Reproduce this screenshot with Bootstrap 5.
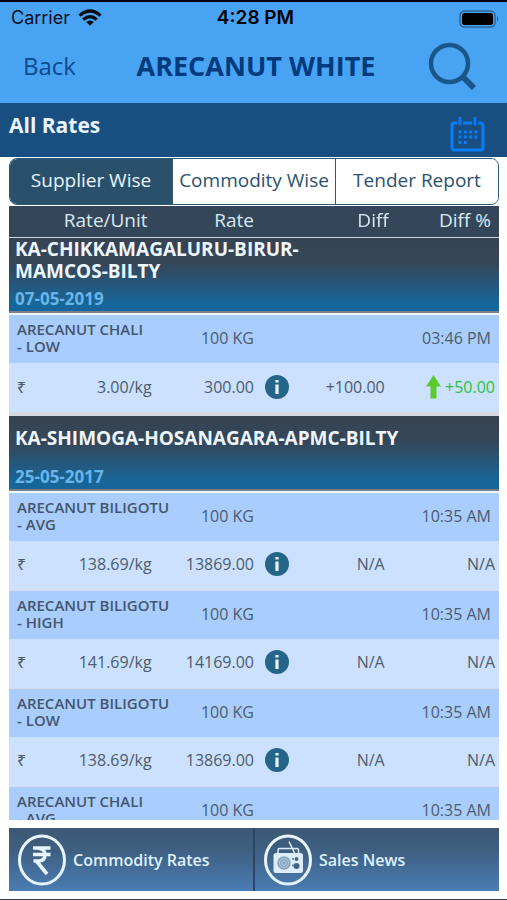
<!DOCTYPE html>
<html lang="en">
<head>
<meta charset="utf-8">
<meta name="viewport" content="width=device-width, initial-scale=1">
<title>Arecanut White - All Rates</title>
<link href="https://cdn.jsdelivr.net/npm/bootstrap@5.3.0/dist/css/bootstrap.min.css" rel="stylesheet">
<style>
  body { font-family: "Open Sans", "Noto Sans", sans-serif; background: #fff; color: #4b5d6b; }
  .app { height: 100vh; border-top: 2px solid #000; border-bottom: 1px solid #333a42; }
  .top-area { background: #49a3f3; }
  .status { height: 32px; padding: 0 7px 0 11px; font: 18px/32px Inter, sans-serif; color: #0b1118; }
  .status .side { flex: 1 1 0; }
  .clock { font-size: 19px; font-weight: 600; color: #000; }
  .title-bar { height: 69px; padding: 0 30px 5px 23px; }
  .back { font-size: 24px; color: #0d4a8f; text-decoration: none; }
  .screen-title { font-size: 27px; font-weight: 700; color: #023a7e; }
  .section-bar { background: #184f80; height: 55px; padding: 0 22px 0 9px; }
  .section-bar h2 { font-size: 21px; line-height: 44px; font-weight: 700; color: #eaf4ff; }
  .bare { background: none; border: 0; padding: 0; line-height: 0; }
  .content { padding: 1px 8px 8px 9px; min-height: 0; }
  .tabs { height: 47px; border: 1px solid #2b5876; border-radius: 8px; margin-bottom: 1px; }
  .tabs button { flex: 1 1 0; border: 0; background: #fff; color: #2b516d; font-size: 19px; white-space: nowrap; padding: 0 0 2px; }
  .tabs button + button { border-left: 1px solid #2b5876; }
  .tabs .on { background: #2a516c; color: #eaf4fb; }
  .rates-scroll { min-height: 0; overflow-y: auto; scrollbar-width: none; }
  .rates-scroll::-webkit-scrollbar { display: none; }
  .rates { table-layout: fixed; border-collapse: separate; border-spacing: 0; font-size: 16px; line-height: 18px; }
  .rates th, .rates td { padding: 0; text-align: right; vertical-align: middle; }
  .rates thead th { position: sticky; top: 0; height: 32px; padding-bottom: 2px; background: #34475a; border-bottom: 1px solid #c9d3dc; color: #dbe7f1; font-size: 19px; line-height: 26px; font-weight: 400; }
  .rates thead th:first-child { padding-right: 28px; }
  .rates thead th:last-child { padding-right: 8px; }
  .rates .group { height: 77px; padding: 0 6px; text-align: left; vertical-align: top; border-bottom: 2px solid #f3f7fc; background: linear-gradient(#364353 0%, #34475a 35%, #17669a 88%, #17669a 98%, #7b7f88 98%); }
  .group-name { width: 400px; max-width: 100%; height: 44px; font-size: 19px; line-height: 22px; font-weight: 700; color: #eef6fd; }
  .group-name.two { width: 300px; }
  .group-date { padding-top: 8px; font-size: 17px; line-height: 18px; font-weight: 700; color: #68b5ea; }
  .rates .name-row > * { background: #a9cdff; height: 48px; padding-bottom: 2px; }
  .name-row th { padding-left: 8px !important; text-align: left !important; font-size: 15px; line-height: 17px; font-weight: 600; color: #44566a; white-space: nowrap; }
  .name-row td:last-child { padding-right: 8px; }
  .value-row td { background: #cbe1ff; height: 50px; padding-bottom: 2px; border-bottom: 1px solid #d8dde6; }
  .value-row td:first-child { padding-left: 8px; padding-right: 24px; }
  .value-row td:nth-child(4) { padding-right: 4px; }
  .value-row td:last-child { padding-right: 4px; }
  .value-row .info { text-align: center; line-height: 0; }
  .value-row.end td { height: 53px; padding-bottom: 0; border-bottom: 4px solid #d5dae1; }
  .rise { color: #2fc03a; }
  .dock { height: 63px; margin: 0 8px 8px 9px; background: linear-gradient(#3d5874 0%, #3f5f81 35%, #4a7cb4 100%); }
  .dock a { flex: 1 1 0; gap: 7px; padding-left: 9px; color: #dff1ff; font-size: 16px; font-weight: 600; text-decoration: none; }
  .dock a + a { border-left: 2px solid #2c4766; }
</style>
<script src="https://cdn.jsdelivr.net/npm/bootstrap@5.3.0/dist/js/bootstrap.bundle.min.js"></script>
</head>
<body>
<svg class="d-none" aria-hidden="true">
  <symbol id="info" viewBox="0 0 24 24"><circle cx="12" cy="12" r="12" fill="#246589"/><path d="M10.4 5h3.2v2.6h-3.2zM10.4 9.4h3.2V19h-3.2z" fill="#e8f4ff"/></symbol>
</svg>
<div class="app d-flex flex-column">
  <header class="top-area">
    <div class="status d-flex align-items-center">
      <div class="side d-flex align-items-center gap-2">Carrier
        <svg width="24" height="18" viewBox="0 0 24 18" aria-label="Wi-Fi"><g fill="none" stroke="#050a10" stroke-width="3.2"><path d="M1.5 6.6Q12-2.6 22.500 6.600"/><path d="M5.200 10.600Q12 4.600 18.800 10.600"/></g><path d="M12 16.800l-3.800-3.900q3.800-3 7.600 0z" fill="#050a10"/></svg>
      </div>
      <div class="clock">4:28 PM</div>
      <div class="side text-end lh-1">
        <svg width="41" height="18" viewBox="0 0 41 18" aria-label="Battery"><rect x="1" y="1" width="35" height="16" rx="4.500" fill="none" stroke="#2d6595" stroke-width="1.500"/><rect x="3" y="3" width="31" height="12" rx="2.500"/><path d="M38 6q2.500 3 0 6z" fill="#2d6595"/></svg>
      </div>
    </div>
    <div class="title-bar d-flex align-items-center justify-content-between">
      <a class="back" href="#">Back</a>
      <h1 class="screen-title m-0 ps-2">ARECANUT WHITE</h1>
      <button class="bare" type="button" aria-label="Search">
        <svg width="49" height="49" viewBox="0 0 49 49" fill="none" stroke="#1b5688"><circle cx="21.500" cy="21.500" r="18.500" stroke-width="4.500"/><path d="M34 34l12 12" stroke-width="6"/></svg>
      </button>
    </div>
  </header>
  <div class="section-bar d-flex justify-content-between align-items-start">
    <h2 class="m-0">All Rates</h2>
    <button class="bare align-self-end pb-1" type="button" aria-label="Choose date">
      <svg width="35" height="36" viewBox="0 0 35 36"><g fill="none" stroke="#087dfc" stroke-width="3"><path d="M7 6H4.500Q2 6 2 8.500V30.500Q2 33 4.500 33H30.500Q33 33 33 30.500V8.500Q33 6 30.500 6H28M13 6H22"/><path d="M10 1v6M25 1v6" stroke-linecap="round"/><path d="M8.500 15H28M8.500 20H28M8.500 25.500H18" stroke-dasharray="3 2.300"/></g></svg>
    </button>
  </div>
  <main class="content d-flex flex-column flex-grow-1">
    <div class="tabs d-flex overflow-hidden flex-shrink-0" role="tablist">
      <button class="on" type="button" role="tab" aria-selected="true">Supplier Wise</button>
      <button type="button" role="tab" aria-selected="false">Commodity Wise</button>
      <button type="button" role="tab" aria-selected="false">Tender Report</button>
    </div>
    <div class="rates-scroll flex-grow-1">
      <table class="rates w-100">
        <colgroup><col style="width:34%"><col style="width:16%"><col style="width:9.500%"><col style="width:18%"><col></colgroup>
        <thead><tr><th scope="col">Rate/Unit</th><th scope="col">Rate</th><th></th><th scope="col">Diff</th><th scope="col">Diff %</th></tr></thead>
        <tbody>
          <tr><th class="group" colspan="5"><div class="group-name two d-flex align-items-center">KA-CHIKKAMAGALURU-BIRUR-MAMCOS-BILTY</div><div class="group-date">07-05-2019</div></th></tr>
          <tr class="name-row"><th scope="row">ARECANUT CHALI<br>- LOW</th><td>100 KG</td><td colspan="3">03:46 PM</td></tr>
          <tr class="value-row end"><td><div class="d-flex justify-content-between"><span>₹</span><span>3.00/kg</span></div></td><td>300.00</td><td class="info"><button class="bare" type="button" aria-label="Details"><svg width="24" height="24"><use href="#info"/></svg></button></td><td>+100.00</td>
            <td class="rise"><div class="d-flex justify-content-end align-items-center gap-1"><svg width="15" height="24" viewBox="0 0 15 24"><path d="M7.500 0L15 11.500H10.500V23.500H4.500V11.500H0z" fill="#5acb2e"/></svg>+50.00</div></td></tr>
        </tbody>
        <tbody>
          <tr><th class="group" colspan="5"><div class="group-name d-flex align-items-center">KA-SHIMOGA-HOSANAGARA-APMC-BILTY</div><div class="group-date">25-05-2017</div></th></tr>
          <tr class="name-row"><th scope="row">ARECANUT BILIGOTU<br>- AVG</th><td>100 KG</td><td colspan="3">10:35 AM</td></tr>
          <tr class="value-row"><td><div class="d-flex justify-content-between"><span>₹</span><span>138.69/kg</span></div></td><td>13869.00</td><td class="info"><button class="bare" type="button" aria-label="Details"><svg width="24" height="24"><use href="#info"/></svg></button></td><td>N/A</td><td>N/A</td></tr>
          <tr class="name-row"><th scope="row">ARECANUT BILIGOTU<br>- HIGH</th><td>100 KG</td><td colspan="3">10:35 AM</td></tr>
          <tr class="value-row"><td><div class="d-flex justify-content-between"><span>₹</span><span>141.69/kg</span></div></td><td>14169.00</td><td class="info"><button class="bare" type="button" aria-label="Details"><svg width="24" height="24"><use href="#info"/></svg></button></td><td>N/A</td><td>N/A</td></tr>
          <tr class="name-row"><th scope="row">ARECANUT BILIGOTU<br>- LOW</th><td>100 KG</td><td colspan="3">10:35 AM</td></tr>
          <tr class="value-row"><td><div class="d-flex justify-content-between"><span>₹</span><span>138.69/kg</span></div></td><td>13869.00</td><td class="info"><button class="bare" type="button" aria-label="Details"><svg width="24" height="24"><use href="#info"/></svg></button></td><td>N/A</td><td>N/A</td></tr>
          <tr class="name-row"><th scope="row">ARECANUT CHALI<br>- AVG</th><td>100 KG</td><td colspan="3">10:35 AM</td></tr>
        </tbody>
      </table>
    </div>
  </main>
  <nav class="dock d-flex flex-shrink-0">
    <a class="d-flex align-items-center" href="#">
      <svg width="48" height="52" viewBox="0 0 48 52"><ellipse cx="24" cy="26" rx="22.500" ry="24" fill="none" stroke="#e6f5ff" stroke-width="3"/><path d="M15 14H32.500M15 20.500H32.500M19 14Q27 14.500 27 20.500Q27 27 20 27H15.500M18 26.500L29 40" fill="none" stroke="#e6f5ff" stroke-width="3.600"/></svg>
      Commodity Rates
    </a>
    <a class="d-flex align-items-center" href="#">
      <svg width="48" height="52" viewBox="0 0 48 52"><ellipse cx="24" cy="26" rx="22.500" ry="24" fill="none" stroke="#e6f5ff" stroke-width="3"/><rect x="9.500" y="19" width="29.500" height="20" rx="2.500" fill="#dceefb"/><path d="M14 20V16.500Q14 14.500 15.500 14.500H33Q34.500 14.500 34.500 16.500V20M30.500 19L25 7.500" fill="none" stroke="#dceefb" stroke-width="1.500"/><circle cx="20" cy="29" r="6.800" fill="#8ba6c1"/><g stroke="#dceefb" stroke-width=".500" fill="none"><circle cx="20" cy="29" r="4.500"/><circle cx="20" cy="29" r="2.200"/></g><circle cx="32.500" cy="32" r="3" fill="#456483"/><circle cx="32.500" cy="25" r="1.900" fill="#456483"/><path d="M28 24h2v2h-2zM28 30.500h2v2h-2z" fill="#6d8dab"/></svg>
      Sales News
    </a>
  </nav>
</div>
</body>
</html>
